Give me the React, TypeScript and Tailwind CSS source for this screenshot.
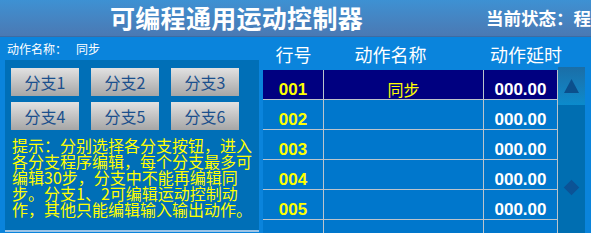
const cjk = { fontFamily: '"Noto Sans CJK SC", "Liberation Sans", sans-serif' }
const latin = { fontFamily: '"Liberation Sans", Arial, sans-serif' }

const branches = ['分支1', '分支2', '分支3', '分支4', '分支5', '分支6']

const hint = [
  '提示：分别选择各分支按钮，进入',
  '各分支程序编辑，每个分支最多可',
  '编辑30步，分支中不能再编辑同',
  '步。分支1、2可编辑运动控制动',
  '作，其他只能编辑输入输出动作。',
]

const rows = [
  { no: '001', name: '同步', delay: '000.00' },
  { no: '002', name: '', delay: '000.00' },
  { no: '003', name: '', delay: '000.00' },
  { no: '004', name: '', delay: '000.00' },
  { no: '005', name: '', delay: '000.00' },
  { no: '', name: '', delay: '' },
]

function Header() {
  return (
    <header
      className="flex h-[37px] shrink-0 items-center overflow-hidden whitespace-nowrap border-b border-[#3d6ca3] bg-gradient-to-b from-[#3d91d3] to-[#4a79b3] pl-[110px] text-white"
      style={cjk}
    >
      <span className="-mt-[2px] text-[25px] font-bold leading-none tracking-[0.3px]">可编程通用运动控制器</span>
      <span className="ml-[123px] text-[17.5px] font-bold leading-none">当前状态：程序</span>
    </header>
  )
}

function BranchPanel() {
  return (
    <div className="flex w-[259px] shrink-0 flex-col pl-[5px]">
      <div className="flex h-[23px] shrink-0 items-center pl-[2px] text-[12px] leading-none text-white" style={cjk}>
        <span>动作名称：</span>
        <span className="ml-[9px]">同步</span>
      </div>

      <div className="h-[170px] w-[254px] shrink-0 bg-[#006fb7] pl-[6px] pt-[8px]">
        <div className="grid grid-cols-[68px_68px_68px] gap-x-[12px] gap-y-[6px]">
          {branches.map((b) => (
            <button
              key={b}
              className="flex h-[28px] items-center justify-center bg-gradient-to-b from-[#e2e2e2] to-[#a6a6a6] text-[16px] leading-none text-[#1b4f8c]"
              style={cjk}
            >
              {b}
            </button>
          ))}
        </div>

        <div className="mt-[7px] pl-[1px] text-[16px] leading-[16px] text-[#ffff00]" style={cjk}>
          {hint.map((line) => (
            <div key={line} className="whitespace-nowrap">
              {line}
            </div>
          ))}
        </div>
      </div>
      <div className="h-[2px] w-[254px] shrink-0 bg-[#9dc4e6]" />
    </div>
  )
}

function ActionTable() {
  return (
    <div className="flex w-[295px] flex-col">
      <div className="flex h-[33px] shrink-0 items-center whitespace-nowrap text-[18px] leading-none text-white" style={cjk}>
        <div className="w-[61px] text-center">行号</div>
        <div className="w-[160px] pr-[27px] text-center">动作名称</div>
        <div className="w-[74px] pl-[6px] text-center">动作延时</div>
      </div>

      {rows.map((r, i) => (
        <div
          key={i}
          className={`flex h-[30px] shrink-0 border-b border-[#bcc4cc] ${i === 0 ? 'bg-[#000080]' : 'bg-[#0077cc]'}`}
        >
          <div className="w-[61px] border-r border-[#bcc4cc] pt-[11px] text-center text-[17px] font-bold leading-[17px] text-[#ffff00]" style={latin}>
            {r.no}
          </div>
          <div className="w-[160px] border-r border-[#bcc4cc] pt-[11px] text-center text-[16px] leading-[17px] text-[#ffff00]" style={cjk}>
            {r.name}
          </div>
          <div className="w-[74px] border-r border-[#bcc4cc] pt-[11px] text-center text-[17px] font-bold leading-[17px] text-white" style={latin}>
            {r.delay}
          </div>
        </div>
      ))}
    </div>
  )
}

function ScrollBar() {
  return (
    <div className="mt-[30px] flex w-[27px] flex-col bg-[#006eb1]">
      <div className="flex h-[38px] shrink-0 items-center justify-center bg-gradient-to-b from-[#1a6ea7] to-[#0b8bcc]">
        <svg width="15" height="14" viewBox="0 0 15 14">
          <polygon points="7.5,0 15,14 0,14" fill="#0b4f8c" />
        </svg>
      </div>
      <div className="flex flex-1 flex-col items-center pt-[77px]">
        <div className="h-[11px] w-[11px] rotate-45 bg-[#0b5396]" />
      </div>
    </div>
  )
}

export default function App() {
  return (
    <div className="flex h-[233px] w-[591px] flex-col overflow-hidden bg-[#0a84dc]">
      <Header />
      <div className="flex min-h-0 flex-1 overflow-hidden">
        <BranchPanel />
        <div className="ml-[4px] flex">
          <ActionTable />
          <ScrollBar />
        </div>
      </div>
    </div>
  )
}
